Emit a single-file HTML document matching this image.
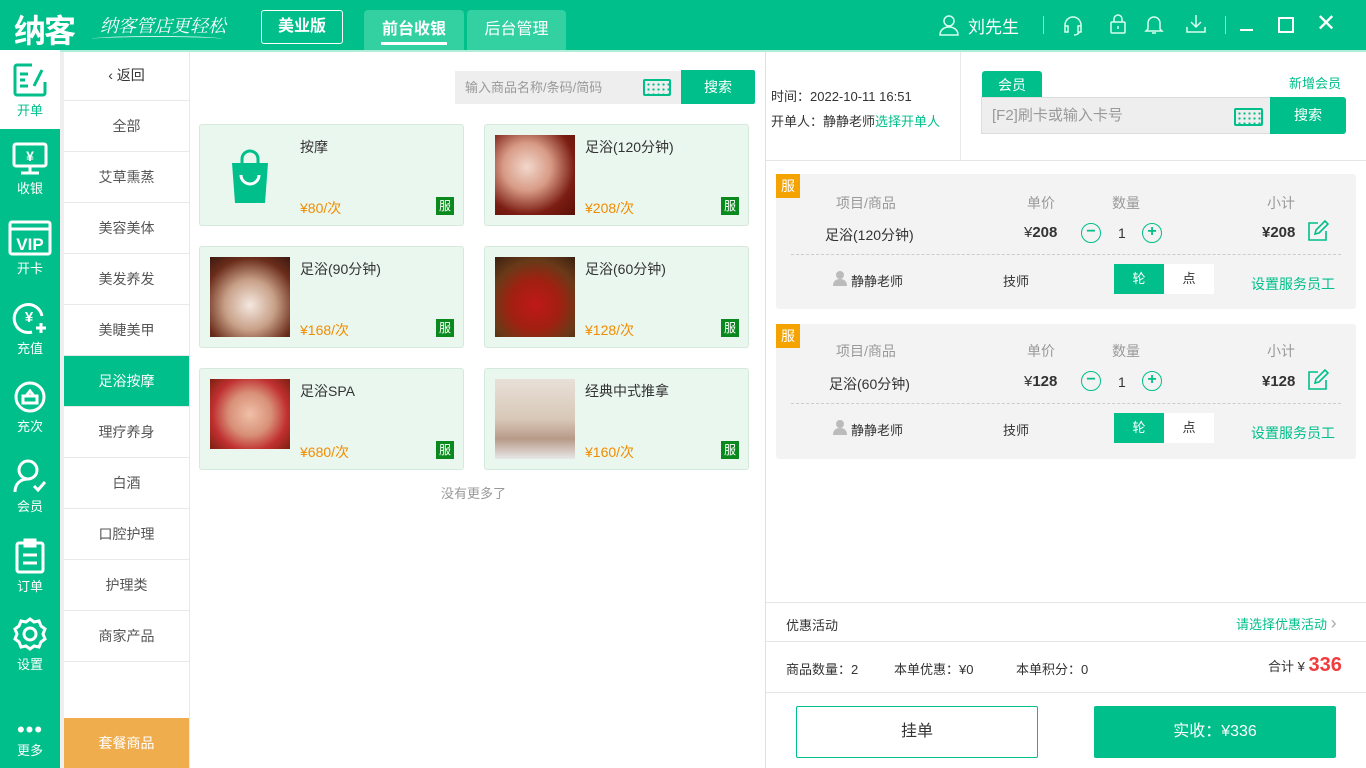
<!DOCTYPE html>
<html><head><meta charset="utf-8"><style>
*{margin:0;padding:0;box-sizing:border-box}
body{width:1366px;height:768px;position:relative;overflow:hidden;font-family:"Liberation Sans","Noto Sans CJK SC",sans-serif;font-size:14px;color:#333;background:#fff}
.a{position:absolute}
.g{color:#00bf8a}
#hdr{left:0;top:0;width:1366px;height:50px;background:#00bf8a}
#side{left:0;top:50px;width:60px;height:718px;background:#00bf8a}
.si{position:absolute;left:0;width:60px;text-align:center;color:#fff;font-size:13px}
.si svg{display:block;margin:0 auto 2px}
.cat{position:absolute;left:64px;width:125px;height:51px;line-height:51px;text-align:center;border-bottom:1px solid #e8e8e8;color:#555;font-size:14px}
.card{position:absolute;width:265px;height:102px;background:#eaf7ef;border:1px solid #d5e9dc;border-radius:3px}
.card .im{position:absolute;left:10px;top:10px;width:80px;height:80px}
.card .n{position:absolute;left:100px;top:12px;font-size:14px;color:#333}
.card .p{position:absolute;left:100px;top:73px;font-size:14px;color:#f08c00}
.card .b{position:absolute;right:9px;bottom:10px;width:18px;height:18px;background:#0a8a1e;color:#fff;font-size:12px;line-height:18px;text-align:center}
.oc{position:absolute;left:776px;width:580px;height:135px;background:#f3f3f3;border-radius:3px}
.oc .bd{position:absolute;left:0;top:0;width:24px;height:24px;background:#f5a300;color:#fff;font-size:14px;line-height:24px;text-align:center}
.oc .t{position:absolute;font-size:14px;color:#999}
.oc .v{position:absolute;font-size:14px;color:#333}
.circ{position:absolute;width:20px;height:20px;border:1.5px solid #00bf8a;border-radius:50%;color:#00bf8a;text-align:center;line-height:16px;font-weight:bold;font-size:16px}
.kb{position:absolute;border:2px solid #00bf8a;border-radius:2px;background-image:radial-gradient(circle,#00bf8a 1px,transparent 1.3px);background-size:5px 5px;background-position:1px 1px}
</style></head><body>
<div id="hdr" class="a">
 <div class="a" style="left:14px;top:6px;font-size:32px;font-weight:bold;color:#fff;letter-spacing:-2px">纳客</div>
 <div class="a" style="left:100px;top:12px;font-size:18px;color:#fff;font-style:italic;font-family:'Noto Serif CJK SC',serif">纳客管店更轻松</div>
 <div class="a" style="left:92px;top:36px;width:130px;height:6px;border-top:1px solid #fff;border-radius:50%;opacity:.8"></div>
 <div class="a" style="left:261px;top:10px;width:82px;height:34px;border:1px solid #fff;border-radius:3px;color:#fff;font-size:16px;font-weight:bold;text-align:center;line-height:32px">美业版</div>
 <div class="a" style="left:364px;top:10px;width:100px;height:40px;background:#33d0a2;border-radius:4px 4px 0 0;color:#fff;font-size:16px;font-weight:bold;text-align:center;line-height:40px">前台收银<div class="a" style="left:17px;top:32px;width:66px;height:3px;background:#fff"></div></div>
 <div class="a" style="left:467px;top:10px;width:99px;height:40px;background:#33d0a2;border-radius:4px 4px 0 0;color:#fff;font-size:16px;text-align:center;line-height:40px">后台管理</div>
 <svg class="a" style="left:938px;top:14px" width="22" height="22" fill="none" stroke="#d8fff0" stroke-width="1.5"><circle cx="11" cy="7" r="5"/><path d="M2 21c0-5 4-8 9-8s9 3 9 8z"/></svg>
 <div class="a" style="left:968px;top:13px;color:#fff;font-size:17px">刘先生</div>
 <div class="a" style="left:1043px;top:16px;width:1px;height:18px;background:#8ee6c8"></div>
 <svg class="a" style="left:1062px;top:14px" width="22" height="22" fill="none" stroke="#d8fff0" stroke-width="1.5"><path d="M3 13v-2a8 8 0 0116 0v2M3 12h3v6H3zM16 12h3v6h-3zM17 18c0 2-3 3-5 3"/></svg>
 <svg class="a" style="left:1108px;top:13px" width="20" height="22" fill="none" stroke="#d8fff0" stroke-width="1.5"><rect x="3" y="9" width="14" height="11" rx="1"/><path d="M6 9V6a4 4 0 018 0v3M10 13v3"/></svg>
 <svg class="a" style="left:1144px;top:13px" width="20" height="22" fill="none" stroke="#d8fff0" stroke-width="1.5"><path d="M4 16V10a6 6 0 0112 0v6l2 2H2zM8 20h4"/></svg>
 <svg class="a" style="left:1185px;top:13px" width="22" height="22" fill="none" stroke="#d8fff0" stroke-width="1.5"><path d="M11 2v12M6 9l5 5 5-5M2 14v5h18v-5"/></svg>
 <div class="a" style="left:1225px;top:16px;width:1px;height:18px;background:#8ee6c8"></div>
 <div class="a" style="left:1240px;top:29px;width:13px;height:2px;background:#fff"></div>
 <div class="a" style="left:1278px;top:17px;width:16px;height:16px;border:2px solid #fff"></div>
 <div class="a" style="left:1316px;top:9px;color:#fff;font-size:24px;line-height:30px">✕</div>
</div>
<div class="a" style="left:0;top:50px;width:1366px;height:2px;background:#7fe3bd;opacity:.6"></div>
<div id="side" class="a">
 <div class="a" style="left:0;top:0;width:60px;height:79px;background:#fff"></div>
 <div class="si" style="top:12px;color:#00bf8a"><svg width="36" height="36" fill="none" stroke="#00bf8a" stroke-width="3"><path d="M20 3H5a2 2 0 00-2 2v26a2 2 0 002 2h26a2 2 0 002-2V20M8 12h8M8 24h8M8 18h5M22 24l8-16"/></svg>开单</div>
 <div class="si" style="top:92px"><svg width="38" height="34" fill="none" stroke="#fff" stroke-width="3"><rect x="3" y="2" width="32" height="22" rx="2"/><path d="M10 31h18M19 24v7"/><text x="19" y="19" fill="#fff" stroke="none" font-size="14" text-anchor="middle" font-weight="bold">¥</text></svg>收银</div>
 <div class="si" style="top:170px"><svg width="44" height="36" fill="none" stroke="#fff" stroke-width="3"><rect x="2" y="2" width="40" height="32" rx="2"/><path d="M2 9h40"/><text x="22" y="30" fill="#fff" stroke="none" font-size="17" text-anchor="middle" font-weight="bold">VIP</text></svg>开卡</div>
 <div class="si" style="top:250px"><svg width="36" height="36" fill="none" stroke="#fff" stroke-width="3"><path d="M30 16a14 14 0 10-10 16"/><path d="M24 28h10M29 23v10"/><text x="17" y="22" fill="#fff" stroke="none" font-size="15" text-anchor="middle" font-weight="bold">¥</text></svg>充值</div>
 <div class="si" style="top:330px"><svg width="36" height="34" fill="none" stroke="#fff" stroke-width="3"><circle cx="18" cy="17" r="14"/><path d="M11 16h14v7H11zM14 16l4-5 4 5"/></svg>充次</div>
 <div class="si" style="top:408px"><svg width="36" height="36" fill="none" stroke="#fff" stroke-width="3"><circle cx="16" cy="12" r="9"/><path d="M3 34c0-8 5-13 13-13M22 28l4 4 7-8"/></svg>会员</div>
 <div class="si" style="top:488px"><svg width="36" height="36" fill="none" stroke="#fff" stroke-width="3"><rect x="5" y="5" width="26" height="29" rx="2"/><path d="M13 2h10v6H13zM11 17h14M11 25h14"/></svg>订单</div>
 <div class="si" style="top:566px"><svg width="36" height="36" fill="none" stroke="#fff" stroke-width="3"><path d="M18 3l4 3 5-1 2 5 4 3-2 5 2 5-4 3-2 5-5-1-4 3-4-3-5 1-2-5-4-3 2-5-2-5 4-3 2-5 5 1z"/><circle cx="18" cy="18" r="6"/></svg>设置</div>
 <div class="si" style="top:672px;font-size:22px;line-height:16px;letter-spacing:1px">•••</div>
 <div class="si" style="top:690px">更多</div>
</div>
<div class="a" style="left:60px;top:52px;width:4px;height:716px;background:#eee"></div>
<div class="a" style="left:189px;top:52px;width:1px;height:716px;background:#e8e8e8"></div>
<div class="cat" style="top:50px;color:#333">‹ 返回</div>
<div class="cat" style="top:101px">全部</div>
<div class="cat" style="top:152px">艾草熏蒸</div>
<div class="cat" style="top:203px">美容美体</div>
<div class="cat" style="top:254px">美发养发</div>
<div class="cat" style="top:305px">美睫美甲</div>
<div class="cat" style="top:356px;background:#00bf8a;color:#fff">足浴按摩</div>
<div class="cat" style="top:407px">理疗养身</div>
<div class="cat" style="top:458px">白酒</div>
<div class="cat" style="top:509px">口腔护理</div>
<div class="cat" style="top:560px">护理类</div>
<div class="cat" style="top:611px">商家产品</div>
<div class="cat" style="top:718px;height:50px;line-height:50px;background:#f0ad4e;color:#fff;border:0">套餐商品</div>

<div class="a" style="left:455px;top:71px;width:226px;height:33px;background:#eee;color:#999;font-size:13px;line-height:33px;padding-left:10px">输入商品名称/条码/简码</div>
<div class="kb" style="left:643px;top:79px;width:28px;height:17px"></div>
<div class="a" style="left:681px;top:70px;width:74px;height:34px;background:#00bf8a;color:#fff;text-align:center;line-height:34px;border-radius:0 2px 2px 0">搜索</div>

<div class="card" style="left:199px;top:124px"><div class="im"><svg width="80" height="80"><path d="M22 28h36l-3 40H25z" fill="#00bf8a"/><path d="M32 30v-6a8 8 0 0116 0v6" stroke="#00bf8a" stroke-width="3" fill="none"/><path d="M31 40a9 9 0 0018 0" stroke="#fff" stroke-width="3" fill="none"/></svg></div><div class="n">按摩</div><div class="p">¥80/次</div><div class="b">服</div></div>
<div class="card" style="left:484px;top:124px"><div class="im" style="background:radial-gradient(circle at 40% 40%,#f2d8cc 0,#d89b86 35%,#7b1d12 70%,#5a1008)"></div><div class="n">足浴(120分钟)</div><div class="p">¥208/次</div><div class="b">服</div></div>
<div class="card" style="left:199px;top:246px"><div class="im" style="background:radial-gradient(circle at 50% 60%,#f4e8e0 0,#c8a088 40%,#6a2c1a 75%,#3a1a10)"></div><div class="n">足浴(90分钟)</div><div class="p">¥168/次</div><div class="b">服</div></div>
<div class="card" style="left:484px;top:246px"><div class="im" style="background:radial-gradient(circle at 50% 60%,#c01818 0,#a02010 40%,#6a3a18 70%,#3a2010)"></div><div class="n">足浴(60分钟)</div><div class="p">¥128/次</div><div class="b">服</div></div>
<div class="card" style="left:199px;top:368px"><div class="im" style="height:70px;background:radial-gradient(circle at 50% 50%,#f0c0a8 0,#d89078 40%,#c03030 70%,#7a2010)"></div><div class="n">足浴SPA</div><div class="p">¥680/次</div><div class="b">服</div></div>
<div class="card" style="left:484px;top:368px"><div class="im" style="background:linear-gradient(180deg,#e8e0d8 0,#d8c8b8 50%,#b89a88 75%,#e8e8e8)"></div><div class="n">经典中式推拿</div><div class="p">¥160/次</div><div class="b">服</div></div>
<div class="a" style="left:441px;top:483px;color:#999;font-size:13px">没有更多了</div>

<div class="a" style="left:765px;top:52px;width:1px;height:716px;background:#e0e0e0"></div>
<div class="a" style="left:771px;top:86px;font-size:13px">时间：2022-10-11 16:51</div>
<div class="a" style="left:771px;top:111px;font-size:13px">开单人：静静老师<span class="g">选择开单人</span></div>
<div class="a" style="left:960px;top:52px;width:1px;height:108px;background:#e8e8e8"></div>
<div class="a" style="left:766px;top:160px;width:600px;height:1px;background:#e5e5e5"></div>
<div class="a" style="left:982px;top:71px;width:60px;height:27px;background:#00bf8a;color:#fff;text-align:center;line-height:28px;border-radius:3px 3px 0 0">会员</div>
<div class="a" style="left:1289px;top:73px;font-size:13px" ><span class="g">新增会员</span></div>
<div class="a" style="left:981px;top:97px;width:290px;height:37px;background:#eee;border:1px solid #ddd;color:#999;font-size:15px;line-height:35px;padding-left:10px">[F2]刷卡或输入卡号</div>
<div class="kb" style="left:1234px;top:108px;width:29px;height:18px"></div>
<div class="a" style="left:1270px;top:97px;width:76px;height:37px;background:#00bf8a;color:#fff;text-align:center;line-height:37px;border-radius:0 3px 3px 0">搜索</div>

<div class="oc" style="top:174px">
 <div class="bd">服</div>
 <div class="t" style="left:60px;top:19px">项目/商品</div><div class="t" style="left:251px;top:19px">单价</div><div class="t" style="left:336px;top:19px">数量</div><div class="t" style="left:491px;top:19px">小计</div>
 <div class="v" style="left:49px;top:51px">足浴(120分钟)</div>
 <div class="v" style="left:248px;top:50px;font-size:15px">¥<b>208</b></div>
 <div class="circ" style="left:305px;top:49px">−</div><div class="v" style="left:342px;top:51px">1</div><div class="circ" style="left:366px;top:49px">+</div>
 <div class="v" style="left:486px;top:50px;font-size:15px"><b>¥208</b></div>
 <svg class="a" style="left:531px;top:46px" width="22" height="22" fill="none" stroke="#00bf8a" stroke-width="1.6"><path d="M11 3H2v17h17v-9M8 14l1-4 9-9 3 3-9 9z"/></svg>
 <div class="a" style="left:15px;top:80px;width:550px;border-top:1px dashed #ccc"></div>
 <svg class="a" style="left:57px;top:97px" width="14" height="15" fill="#bbb"><circle cx="7" cy="4" r="4"/><path d="M0 15c0-5 3-7 7-7s7 2 7 7z"/></svg>
 <div class="v" style="left:75px;top:97px;font-size:13px">静静老师</div>
 <div class="v" style="left:227px;top:97px;font-size:13px">技师</div>
 <div class="a" style="left:338px;top:90px;width:50px;height:30px;background:#00bf8a;color:#fff;text-align:center;line-height:30px;font-size:13px">轮</div>
 <div class="a" style="left:388px;top:90px;width:50px;height:30px;background:#fff;text-align:center;line-height:30px;font-size:13px">点</div>
 <div class="a g" style="left:475px;top:100px;font-size:14px">设置服务员工</div>
</div>
<div class="oc" style="top:324px">
 <div class="bd">服</div>
 <div class="t" style="left:60px;top:17px">项目/商品</div><div class="t" style="left:251px;top:17px">单价</div><div class="t" style="left:336px;top:17px">数量</div><div class="t" style="left:491px;top:17px">小计</div>
 <div class="v" style="left:53px;top:50px">足浴(60分钟)</div>
 <div class="v" style="left:248px;top:49px;font-size:15px">¥<b>128</b></div>
 <div class="circ" style="left:305px;top:47px">−</div><div class="v" style="left:342px;top:50px">1</div><div class="circ" style="left:366px;top:47px">+</div>
 <div class="v" style="left:486px;top:49px;font-size:15px"><b>¥128</b></div>
 <svg class="a" style="left:531px;top:45px" width="22" height="22" fill="none" stroke="#00bf8a" stroke-width="1.6"><path d="M11 3H2v17h17v-9M8 14l1-4 9-9 3 3-9 9z"/></svg>
 <div class="a" style="left:15px;top:79px;width:550px;border-top:1px dashed #ccc"></div>
 <svg class="a" style="left:57px;top:96px" width="14" height="15" fill="#bbb"><circle cx="7" cy="4" r="4"/><path d="M0 15c0-5 3-7 7-7s7 2 7 7z"/></svg>
 <div class="v" style="left:75px;top:96px;font-size:13px">静静老师</div>
 <div class="v" style="left:227px;top:96px;font-size:13px">技师</div>
 <div class="a" style="left:338px;top:89px;width:50px;height:30px;background:#00bf8a;color:#fff;text-align:center;line-height:30px;font-size:13px">轮</div>
 <div class="a" style="left:388px;top:89px;width:50px;height:30px;background:#fff;text-align:center;line-height:30px;font-size:13px">点</div>
 <div class="a g" style="left:475px;top:99px;font-size:14px">设置服务员工</div>
</div>

<div class="a" style="left:766px;top:602px;width:600px;height:1px;background:#e5e5e5"></div>
<div class="a" style="left:786px;top:615px;font-size:13px">优惠活动</div>
<div class="a g" style="left:1236px;top:613px;font-size:13px">请选择优惠活动 <span style="color:#aaa;font-size:18px">›</span></div>
<div class="a" style="left:766px;top:641px;width:600px;height:1px;background:#e5e5e5"></div>
<div class="a" style="left:786px;top:659px;font-size:13px">商品数量：2</div>
<div class="a" style="left:894px;top:659px;font-size:13px">本单优惠：¥0</div>
<div class="a" style="left:1016px;top:659px;font-size:13px">本单积分：0</div>
<div class="a" style="left:1268px;top:654px;font-size:13px">合计 ¥ <b style="color:#f03c3c;font-size:20px">336</b></div>
<div class="a" style="left:766px;top:692px;width:600px;height:1px;background:#e5e5e5"></div>
<div class="a" style="left:796px;top:706px;width:242px;height:52px;border:1px solid #00bf8a;border-radius:2px;text-align:center;line-height:50px;font-size:16px">挂单</div>
<div class="a" style="left:1094px;top:706px;width:242px;height:52px;background:#00bf8a;border-radius:2px;text-align:center;line-height:52px;font-size:16px;color:#fff">实收：¥336</div>
</body></html>
